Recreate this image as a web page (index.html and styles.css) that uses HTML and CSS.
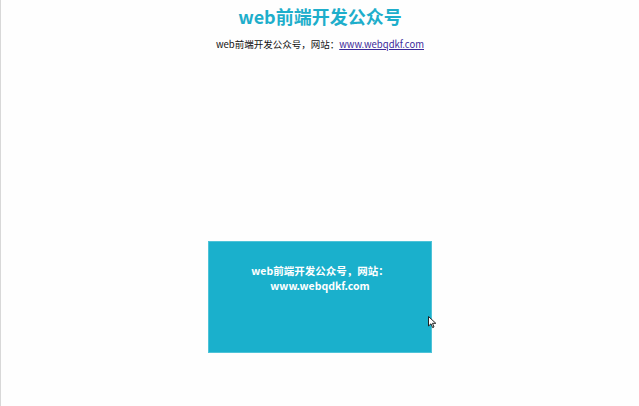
FILE: index.html
```html
<!DOCTYPE html>
<html lang="zh">
<head>
<meta charset="utf-8">
<title>web前端开发公众号</title>
<link rel="stylesheet" href="styles.css">
</head>
<body>
<div class="page">
  <h1 class="title">web前端开发公众号</h1>
  <p class="sub">web前端开发公众号，网站：<a class="link" href="#">www.webqdkf.com</a></p>
  <div class="box">
    <p class="box-text">web前端开发公众号，网站：<br>www.webqdkf.com</p>
    <svg class="cursor" width="9" height="13" viewBox="0 0 9 13"><path d="M0.5 0.5 L0.5 10 L3 7.8 L4.6 11.6 L6 11 L4.5 7.3 L7.8 7.3 Z" fill="#fff" stroke="#222" stroke-width="1"/></svg>
  </div>
</div>
</body>
</html>
```
FILE: styles.css
```css
html, body {
  margin: 0;
  padding: 0;
  background: #fefefe;
}
.page {
  box-sizing: border-box;
  height: 406px;
  border-left: 1px solid #d8d8d8;
  display: flex;
  flex-direction: column;
  align-items: center;
  font-family: "Noto Sans CJK SC", "Noto Sans", sans-serif;
}
.title {
  margin: 2px 0 0;
  font-size: 18px;
  line-height: 28px;
  font-weight: 700;
  color: #1eaecb;
}
.sub {
  margin: 6px 0 0;
  font-size: 9.5px;
  line-height: 16px;
  color: #111;
}
.link {
  color: #3b2a9a;
  text-decoration: underline;
}
.box {
  position: relative;
  box-sizing: border-box;
  margin-top: 189px;
  width: 224px;
  height: 112px;
  background: #1ab0cc;
  border: 1px solid #4ec3d8;
  display: flex;
  justify-content: center;
}
.box-text {
  margin: 21px 0 0;
  font-size: 10.5px;
  line-height: 15px;
  font-weight: 700;
  color: #fff;
  text-align: center;
}
.cursor {
  position: absolute;
  left: 219px;
  top: 74px;
}
```
